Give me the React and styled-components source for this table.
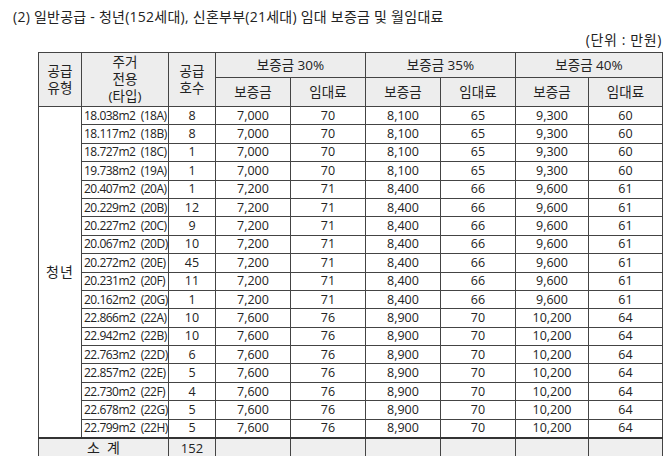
import styled, { createGlobalStyle } from "styled-components";

const GlobalStyle = createGlobalStyle`
  body {
    margin: 0;
    background: #fff;
    font-family: "Open Sans", "Noto Sans CJK KR", sans-serif;
    color: #222;
  }
`;

const Page = styled.div`
  width: 665px;
  height: 456px;
  overflow: hidden;
  padding: 0 3px 0 13px;
  box-sizing: border-box;
`;

const Title = styled.div`
  font-size: 14px;
  line-height: 20px;
  padding-top: 7px;
  letter-spacing: 0.25px;
  white-space: pre;
`;

const Unit = styled.div`
  text-align: right;
  font-size: 14px;
  line-height: 18px;
  margin-top: 4px;
  letter-spacing: 0.6px;
  white-space: pre;
`;

const Table = styled.table`
  margin-left: 25px;
  margin-top: 3px;
  border-collapse: collapse;
  table-layout: fixed;
  width: 624px;
  border: 1px solid #333;
`;

const HeadCell = styled.th`
  background: #ededed;
  border: 1px solid #444;
  font-weight: 400;
  font-size: 13.5px;
  line-height: 17px;
  height: ${(p) => p.$h || 24}px;
  padding: 0;
  text-align: center;
  vertical-align: middle;
`;

const Cell = styled.td`
  border: 1px solid #444;
  font-size: 12.5px;
  height: 17.4px;
  line-height: 16px;
  padding: 0;
  text-align: center;
  vertical-align: middle;
`;

const AreaCell = styled(Cell)`
  text-align: left;
  padding-left: 2px;
  font-size: 12px;
  letter-spacing: -0.5px;
  white-space: pre;
`;

const GroupCell = styled(Cell)`
  font-size: 14px;
  letter-spacing: 1px;
`;

const TotalCell = styled.td`
  background: #efefef;
  border: 1px solid #444;
  border-top: 2px solid #333;
  font-size: ${(p) => (p.$label ? 14 : 13)}px;
  height: 17px;
  line-height: 16px;
  padding: 0;
  text-align: center;
  white-space: pre;
`;

const rows = [
  ["18.038m2", "18A", 8, "7,000", 70, "8,100", 65, "9,300", 60],
  ["18.117m2", "18B", 8, "7,000", 70, "8,100", 65, "9,300", 60],
  ["18.727m2", "18C", 1, "7,000", 70, "8,100", 65, "9,300", 60],
  ["19.738m2", "19A", 1, "7,000", 70, "8,100", 65, "9,300", 60],
  ["20.407m2", "20A", 1, "7,200", 71, "8,400", 66, "9,600", 61],
  ["20.229m2", "20B", 12, "7,200", 71, "8,400", 66, "9,600", 61],
  ["20.227m2", "20C", 9, "7,200", 71, "8,400", 66, "9,600", 61],
  ["20.067m2", "20D", 10, "7,200", 71, "8,400", 66, "9,600", 61],
  ["20.272m2", "20E", 45, "7,200", 71, "8,400", 66, "9,600", 61],
  ["20.231m2", "20F", 11, "7,200", 71, "8,400", 66, "9,600", 61],
  ["20.162m2", "20G", 1, "7,200", 71, "8,400", 66, "9,600", 61],
  ["22.866m2", "22A", 10, "7,600", 76, "8,900", 70, "10,200", 64],
  ["22.942m2", "22B", 10, "7,600", 76, "8,900", 70, "10,200", 64],
  ["22.763m2", "22D", 6, "7,600", 76, "8,900", 70, "10,200", 64],
  ["22.857m2", "22E", 5, "7,600", 76, "8,900", 70, "10,200", 64],
  ["22.730m2", "22F", 4, "7,600", 76, "8,900", 70, "10,200", 64],
  ["22.678m2", "22G", 5, "7,600", 76, "8,900", 70, "10,200", 64],
  ["22.799m2", "22H", 5, "7,600", 76, "8,900", 70, "10,200", 64],
];

const widths = [43, 87, 47, 75, 75, 75, 75, 73, 74];

const App = () => {
  return (
    <>
      <GlobalStyle />
      <Page>
        <Title>(2) 일반공급 - 청년(152세대), 신혼부부(21세대) 임대 보증금 및 월임대료</Title>
        <Unit>(단위 : 만원)</Unit>
        <Table>
          <colgroup>
            {widths.map((w, i) => (
              <col key={i} style={{ width: w }} />
            ))}
          </colgroup>
          <thead>
            <tr>
              <HeadCell rowSpan={2}>
                공급
                <br />
                유형
              </HeadCell>
              <HeadCell rowSpan={2}>
                주거
                <br />
                전용
                <br />
                (타입)
              </HeadCell>
              <HeadCell rowSpan={2}>
                공급
                <br />
                호수
              </HeadCell>
              <HeadCell colSpan={2}>보증금 30%</HeadCell>
              <HeadCell colSpan={2}>보증금 35%</HeadCell>
              <HeadCell colSpan={2}>보증금 40%</HeadCell>
            </tr>
            <tr>
              <HeadCell $h={28}>보증금</HeadCell>
              <HeadCell $h={28}>임대료</HeadCell>
              <HeadCell $h={28}>보증금</HeadCell>
              <HeadCell $h={28}>임대료</HeadCell>
              <HeadCell $h={28}>보증금</HeadCell>
              <HeadCell $h={28}>임대료</HeadCell>
            </tr>
          </thead>
          <tbody>
            {rows.map((r, i) => (
              <tr key={r[1]}>
                {i === 0 && <GroupCell rowSpan={rows.length}>청년</GroupCell>}
                <AreaCell>{`${r[0]}  (${r[1]})`}</AreaCell>
                {r.slice(2).map((v, j) => (
                  <Cell key={j}>{v}</Cell>
                ))}
              </tr>
            ))}
            <tr>
              <TotalCell colSpan={2} $label>
                {"소  계"}
              </TotalCell>
              <TotalCell>152</TotalCell>
              <TotalCell />
              <TotalCell />
              <TotalCell />
              <TotalCell />
              <TotalCell />
              <TotalCell />
            </tr>
          </tbody>
        </Table>
      </Page>
    </>
  );
};

export default App;
